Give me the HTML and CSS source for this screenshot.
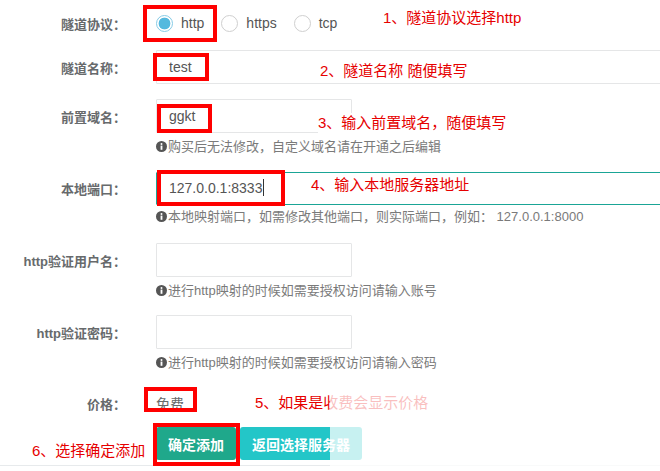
FILE: index.html
```html
<!DOCTYPE html>
<html lang="zh-CN">
<head>
<meta charset="utf-8">
<title>添加隧道</title>
<link rel="stylesheet" href="styles.css">
</head>
<body>
<div class="page">
  <form class="form">
    <div class="row row-radio">
      <label class="lbl">隧道协议：</label>
      <div class="ctl radios">
        <span class="radio"><span class="dot on"></span>http</span>
        <span class="radio"><span class="dot"></span>https</span>
        <span class="radio"><span class="dot"></span>tcp</span>
      </div>
    </div>
    <div class="row row-name">
      <label class="lbl">隧道名称：</label>
      <input class="inp wide" type="text" value="test">
    </div>
    <div class="row row-domain">
      <label class="lbl">前置域名：</label>
      <input class="inp short" type="text" value="ggkt">
      <p class="help"><svg class="ico" viewBox="0 0 12 12"><circle cx="6" cy="6" r="6" fill="#555"/><rect x="5" y="5" width="2" height="4.6" fill="#fff"/><circle cx="6" cy="3.2" r="1.1" fill="#fff"/></svg>购买后无法修改，自定义域名请在开通之后编辑</p>
    </div>
    <div class="row row-port">
      <label class="lbl">本地端口：</label>
      <div class="inp wide focus">127.0.0.1:8333<span class="caret"></span></div>
      <p class="help help-tight"><svg class="ico" viewBox="0 0 12 12"><circle cx="6" cy="6" r="6" fill="#555"/><rect x="5" y="5" width="2" height="4.6" fill="#fff"/><circle cx="6" cy="3.2" r="1.1" fill="#fff"/></svg>本地映射端口，如需修改其他端口，则实际端口，例如： 127.0.0.1:8000</p>
    </div>
    <div class="row row-user">
      <label class="lbl">http验证用户名：</label>
      <input class="inp short" type="text" value="">
      <p class="help"><svg class="ico" viewBox="0 0 12 12"><circle cx="6" cy="6" r="6" fill="#555"/><rect x="5" y="5" width="2" height="4.6" fill="#fff"/><circle cx="6" cy="3.2" r="1.1" fill="#fff"/></svg>进行http映射的时候如需要授权访问请输入账号</p>
    </div>
    <div class="row row-pass">
      <label class="lbl">http验证密码：</label>
      <input class="inp short" type="text" value="">
      <p class="help"><svg class="ico" viewBox="0 0 12 12"><circle cx="6" cy="6" r="6" fill="#555"/><rect x="5" y="5" width="2" height="4.6" fill="#fff"/><circle cx="6" cy="3.2" r="1.1" fill="#fff"/></svg>进行http映射的时候如需要授权访问请输入密码</p>
    </div>
    <div class="row row-price">
      <label class="lbl">价格：</label>
      <div class="static">免费</div>
    </div>
    <div class="row row-actions">
      <div class="actions">
        <button type="button" class="btn btn-primary">确定添加</button>
        <button type="button" class="btn btn-info">返回选择服务器</button>
      </div>
    </div>
    <div class="divider"></div>
  </form>

  <div class="notes">
    <span class="box b1"></span>
    <span class="box b2"></span>
    <span class="box b3"></span>
    <span class="box b4"></span>
    <span class="box b5"></span>
    <span class="box b6"></span>
    <span class="note n1">1、隧道协议选择http</span>
    <span class="note n2">2、隧道名称 随便填写</span>
    <span class="note n3">3、输入前置域名，随便填写</span>
    <span class="note n4">4、输入本地服务器地址</span>
    <span class="note n5">5、如果是收费会显示价格</span>
    <span class="note n6">6、选择确定添加</span>
  </div>
  <div class="fade"></div>
</div>
</body>
</html>
```
FILE: styles.css
```css
html, body {
  margin: 0;
  padding: 0;
  background: #fff;
  overflow: hidden;
}
body {
  font-family: "Liberation Sans", "Noto Sans CJK SC", sans-serif;
  color: #676a6c;
}
.page {
  position: relative;
  width: 660px;
  height: 471px;
  overflow: hidden;
}
.form {
  margin: 0;
  padding-top: 6px;
}
.row {
  display: grid;
  grid-template-columns: 126px 520px;
  column-gap: 30px;
  align-items: center;
}
.lbl {
  grid-column: 1;
  grid-row: 1;
  text-align: right;
  font-size: 13px;
  font-weight: bold;
  color: #676a6c;
  white-space: nowrap;
}
.row > .inp,
.row > .ctl,
.row > .static,
.row > .actions,
.row > .help {
  grid-column: 2;
}
.row-radio { height: 34px; }
.row-name { margin-top: 10px; }
.row-domain { margin-top: 15px; }
.row-port { margin-top: 17px; }
.row-user { margin-top: 18px; }
.row-pass { margin-top: 16px; }
.row-price { margin-top: 15px; height: 34px; }
.row-actions { margin-top: 7px; }

.radios {
  display: flex;
  align-items: center;
  font-size: 14px;
  color: #555;
}
.radio {
  display: inline-flex;
  align-items: center;
  gap: 8px;
  margin-right: 17px;
}
.dot {
  width: 17px;
  height: 17px;
  box-sizing: border-box;
  border: 1px solid #cfcfcf;
  border-radius: 50%;
  background: #fff;
}
.dot.on {
  border-color: #86cbe6;
  background: radial-gradient(circle, #55b9de 0 5.6px, #fff 6.2px);
}

.inp {
  box-sizing: border-box;
  height: 34px;
  padding: 6px 12px;
  border: 1px solid #e5e6e7;
  border-radius: 1px;
  font-family: "Liberation Sans", "Noto Sans CJK SC", sans-serif;
  font-size: 14px;
  color: #555;
  background: #fff;
  outline: none;
  margin: 0;
}
.inp.wide { width: 520px; }
.inp.short { width: 196px; }
.inp.focus {
  height: 33px;
  line-height: 19px;
  padding-top: 6px;
  border-color: #1aa596;
}
.caret {
  display: inline-block;
  width: 1px;
  height: 17px;
  background: #333;
  vertical-align: -3px;
  margin-left: 1px;
}

.help {
  grid-row: 2;
  margin: 5px 0 0;
  font-size: 13px;
  line-height: 17px;
  color: #7a7a7a;
  white-space: nowrap;
}
.help-tight { margin-top: 3px; }
.ico {
  width: 11px;
  height: 11px;
  margin-right: 1px;
  vertical-align: -1px;
}

.static {
  font-size: 14px;
  color: #676a6c;
}

.actions {
  display: flex;
  gap: 4px;
}
.btn {
  height: 33px;
  padding: 0 12px;
  border: 0;
  border-radius: 3px;
  font-family: "Liberation Sans", "Noto Sans CJK SC", sans-serif;
  font-size: 14px;
  font-weight: bold;
  color: #fff;
}
.btn-primary { background: #1fa88b; }
.btn-info { background: #23c6c8; }

.divider {
  margin-top: 5px;
  border-top: 1px solid #e7eaec;
}

/* annotation overlay */
.notes {
  position: absolute;
  inset: 0;
  pointer-events: none;
}
.box {
  position: absolute;
  box-sizing: border-box;
  border: 4px solid #f00;
}
.b1 { left: 143px; top: 5px; width: 74px; height: 37px; }
.b2 { left: 153px; top: 53px; width: 56px; height: 28px; }
.b3 { left: 157px; top: 104px; width: 55px; height: 29px; }
.b4 { left: 157px; top: 170px; width: 128px; height: 36px; }
.b5 { left: 144px; top: 387px; width: 53px; height: 25px; }
.b6 { left: 153px; top: 423px; width: 87px; height: 43px; }

.note {
  position: absolute;
  font-size: 15px;
  line-height: 20px;
  color: #e60000;
  white-space: nowrap;
  background: #fff;
}
.n1 { left: 383px; top: 8px; }
.n2 { left: 320px; top: 61px; }
.n3 { left: 318px; top: 113px; }
.n4 { left: 311px; top: 175px; }
.n5 { left: 255px; top: 393px; }
.n6 { left: 32px; top: 441px; background: transparent; }

.fade {
  position: absolute;
  left: 330px;
  top: 382px;
  width: 330px;
  height: 89px;
  background: rgba(255, 255, 255, 0.75);
}
```
